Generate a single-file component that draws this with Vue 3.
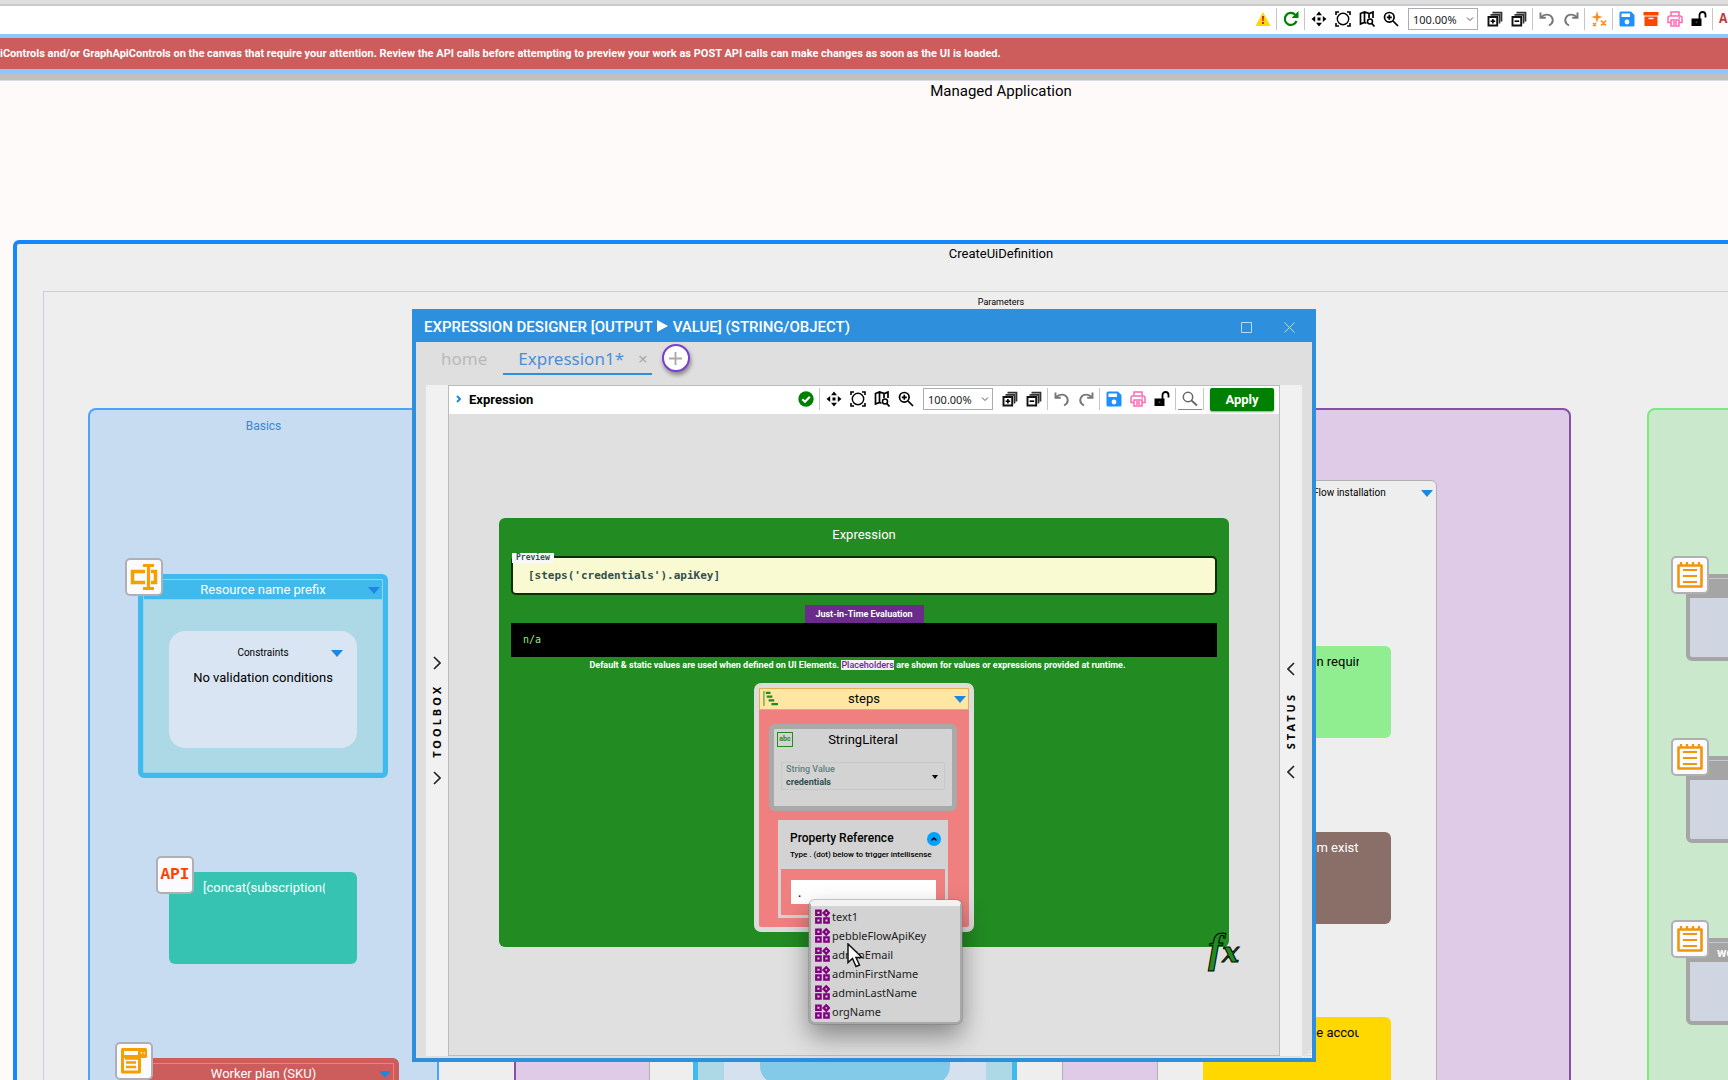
<template>
  <div class="app">
    <svg class="sprite" aria-hidden="true">
      <symbol id="i-warn" viewBox="0 0 16 16"><path d="M8 1 15.500 15H.5z" fill="#ffd800" /><path d="M7 5h2l-.3 5H7.300zM7 11h2v2H7z" fill="#d22" /></symbol>
      <symbol id="i-refresh" viewBox="0 0 16 16"><path d="M13.500 10A6 6 0 1 1 12.200 3.800" fill="none" stroke="green" stroke-width="2.200" /><path d="M15.500 0v7h-7z" fill="green" /></symbol>
      <symbol id="i-move" viewBox="0 0 16 16"><path d="M8 .5l3 3.700H5zM8 15.500l3-3.700H5zM.5 8l3.700-3v6zM15.500 8l-3.700-3v6zM6.500 6.500h3v3h-3z" /></symbol>
      <symbol id="i-fit" viewBox="0 0 16 16"><circle cx="8" cy="8" r="5.700" fill="none" stroke="#000" stroke-width="1.400" /><path d="M1 4V1h3M12 1h3v3M15 12v3h-3M4 15H1v-3" fill="none" stroke="#000" stroke-width="1.600" /></symbol>
      <symbol id="i-map" viewBox="0 0 16 16"><path d="M7.500 12.200 5.500 11.500 1.500 13V2.500L5.500 1l5 1.500L14 1v6M5.500 1v10.500M10 2.500V7" fill="none" stroke="#000" stroke-width="1.700" /><circle cx="11" cy="10.500" r="2.500" fill="none" stroke="#000" stroke-width="1.500" /><path d="M12.800 12.500 15.500 15.500" stroke="#000" stroke-width="1.700" /></symbol>
      <symbol id="i-zoom" viewBox="0 0 16 16"><circle cx="6.300" cy="6.300" r="4.800" fill="none" stroke="#000" stroke-width="1.700" /><path d="M10 10l5 5M3.800 6.300h5M6.300 3.800v5" fill="none" stroke="#000" stroke-width="1.700" /></symbol>
      <symbol id="i-expand" viewBox="0 0 16 16"><path d="M1.500 6h8.700v8.500H1.500z" fill="none" stroke="#111" stroke-width="1.900" /><path d="M3.500 3.800h9V12.500M5.500 1.600h9V10.500" fill="none" stroke="#333" stroke-width="1.700" /><path d="M5.900 8v4.500M3.600 10.200h4.600" stroke="#000" stroke-width="1.600" /></symbol>
      <symbol id="i-collapse" viewBox="0 0 16 16"><path d="M1.500 6h8.700v8.500H1.500z" fill="none" stroke="#111" stroke-width="1.900" /><path d="M3.500 3.800h9V12.500M5.500 1.600h9V10.500" fill="none" stroke="#333" stroke-width="1.700" /><path d="M3.600 10.200h4.600" stroke="#000" stroke-width="1.600" /></symbol>
      <symbol id="i-undo" viewBox="0 0 16 16"><path d="M1.500 1.500v5.300h5.300M2 6.300C5 3 10.500 2.500 13 6.500c1.500 3 .5 6-3 8" fill="none" stroke="#777" stroke-width="1.900" /></symbol>
      <symbol id="i-redo" viewBox="0 0 16 16"><path d="M14.500 1.500v5.300H9.200M14 6.300C11 3 5.500 2.500 3 6.500c-1.500 3-.5 6 3 8" fill="none" stroke="#777" stroke-width="1.900" /></symbol>
      <symbol id="i-magic" viewBox="0 0 16 16"><path d="M6 0l1.300 4.700L12 6 7.300 7.300 6 12 4.700 7.300 0 6l4.700-1.300z" fill="#ff8c1a" /><path d="M10 9.500l5 5M15 9.500l-5 5M2 12l3 3M5 12l-3 3" stroke="#ff8c1a" stroke-width="1.600" /></symbol>
      <symbol id="i-save" viewBox="0 0 16 16"><path d="M2 .5h10L15.500 4v10a1.500 1.500 0 0 1-1.500 1.500H2A1.500 1.500 0 0 1 .5 14V2A1.500 1.500 0 0 1 2 .5z" fill="#1e90ff" /><path d="M2.500 2.500h8.500v3.500H2.500z" fill="#fff" /><circle cx="8" cy="11" r="2.400" fill="#fff" /></symbol>
      <symbol id="i-archive" viewBox="0 0 16 16"><path d="M.5 1h15v3.500H.5zM1.500 5.500h13v9.500h-13z" fill="#ff4500" /><path d="M5.500 7.500h5" stroke="#fff" stroke-width="1.400" /></symbol>
      <symbol id="i-print" viewBox="0 0 16 16"><path d="M4 5V1h8v4M4 11.500H1V7a2 2 0 0 1 2-2h10a2 2 0 0 1 2 2v4.500h-3M4 9h8v6H4zM6 11h4M6 13h4M11.500 7h1.500" fill="none" stroke="#ff69b4" stroke-width="1.500" /></symbol>
      <symbol id="i-unlock" viewBox="0 0 16 16"><path d="M.5 7.500h10V15H.5z" /><path d="M8.500 8V4a3 3 0 0 1 6 0v2.500" fill="none" stroke="#000" stroke-width="1.800" /><circle cx="5.500" cy="11.200" r="1" fill="#444" /></symbol>
      <symbol id="i-ok" viewBox="0 0 16 16"><circle cx="8" cy="8" r="7.700" fill="green" /><path d="M4.300 8.200 7 10.800 11.800 5.800" fill="none" stroke="#fff" stroke-width="2.200" /></symbol>
      <symbol id="i-search" viewBox="0 0 16 16"><circle cx="6" cy="6" r="4.700" fill="none" stroke="#666" stroke-width="1.500" /><path d="M9.500 9.500l5.500 5" stroke="#666" stroke-width="1.800" /></symbol>
      <symbol id="i-rename" viewBox="0 0 28 28"><path d="M15 8.500H2.500v11H15M21 8.500h4.500v11H21" fill="none" stroke="#f4a000" stroke-width="3.500" /><path d="M13 2.500h11M13 25.500h11M18.500 2.500v23" stroke="#f4a000" stroke-width="3.200" /></symbol>
      <symbol id="i-form" viewBox="0 0 28 28"><path d="M2.500 2.500h17v22.500h-17zM2.500 9.500h23v-7h-6" fill="none" stroke="#f4a000" stroke-width="3" stroke-linejoin="round" /><path d="M5 11.500h13M6 15.500h10M6 20h10" stroke="#f4a000" stroke-width="2.500" /><path d="M19 3h6v6h-6z" fill="#f4a000" /><path d="M21 5l.8 2M24 5l.5 2" stroke="#fff" /></symbol>
      <symbol id="i-note" viewBox="0 0 28 28"><path d="M2.500 4.500h23v21h-23z" fill="none" stroke="#f0960a" stroke-width="2.600" stroke-linejoin="round" /><path d="M5 1v3M11 1v3M17 1v3M23 1v3M7 9h14M7 15h14M7 21h14" stroke="#f0960a" stroke-width="2.200" /></symbol>
      <symbol id="i-member" viewBox="0 0 16 16"><path d="M1.300 1.800h4.700v4.400H1.300zM1.300 9.900h4.700v4.600H1.300zM9.900 9.900h4.700v4.600H9.900zM12 1.300l2.900 2.900L12 7.100 9.100 4.200z" fill="none" stroke="purple" stroke-width="2.400" /></symbol>
      <symbol id="i-steps" viewBox="0 0 16 16"><path d="M1 0v16" stroke="#228b22" stroke-width="1" /><path d="M3 2h5M4 6h6M6 10h6M9 14h7" stroke="#228b22" stroke-width="2.200" /></symbol>
    </svg>

    <header class="topbar">
      <template v-for="(tool, i) in topTools" :key="i">
        <span v-if="tool === '|'" class="sep"></span>
        <span v-else-if="tool === 'select'" class="zoom-box">
          <select aria-label="Zoom"><option>100.00%</option></select>
          <svg class="chev" viewBox="0 0 8 8"><path d="M1 2.500l3 3 3-3" /></svg>
        </span>
        <button v-else class="tool" :aria-label="tool"><svg><use :href="'#i-' + tool" /></svg></button>
      </template>
      <button class="api-tool">API</button>
    </header>
    <div class="banner">iControls and/or GraphApiControls on the canvas that require your attention. Review the API calls before attempting to preview your work as POST API calls can make changes as soon as the UI is loaded.</div>
    <div class="divider"></div>

    <main class="canvas">
      <h1>Managed Application</h1>
      <section class="create">
        <h2>CreateUiDefinition</h2>
        <div class="params">
          <h3>Parameters</h3>

          <div class="group basics">
            <h4>Basics</h4>
            <div class="node prefix">
              <span class="badge"><svg><use href="#i-rename" /></svg></span>
              <div class="node-head"><span>Resource name prefix</span><i class="tri"></i></div>
              <div class="constraints">
                <div class="constraints-head">Constraints<i class="tri"></i></div>
                <p>No validation conditions</p>
              </div>
            </div>
            <div class="card concat">
              <span class="badge api">API</span>
              <div class="clip">[concat(subscription(</div>
            </div>
            <div class="node worker">
              <span class="badge"><svg><use href="#i-form" /></svg></span>
              <div class="node-head"><span>Worker plan (SKU)</span><i class="tri"></i></div>
            </div>
          </div>

          <div class="group credentials">
            <div class="section first">
              <div class="blue-node"><div class="blue-panel"><div class="blue-inner"></div></div></div>
            </div>
            <div class="section second">
              <div class="section-head">Flow installation</div>
              <i class="tri"></i>
              <div
                v-for="card in cards"
                :key="card.text"
                :class="['card', card.kind]"
                :style="{ top: card.top + 'px' }"
              >
                <div class="clip tail">{{ card.text }}</div>
              </div>
            </div>
          </div>

          <div class="group outputs">
            <div v-for="out in outputs" :key="out.top" class="node output" :style="{ top: out.top + 'px' }">
              <span class="badge"><svg><use href="#i-note" /></svg></span>
              <div class="node-head">{{ out.text }}</div>
            </div>
          </div>
        </div>
      </section>
    </main>

    <div class="window" role="dialog" aria-label="Expression designer">
      <div class="titlebar">
        <span>EXPRESSION DESIGNER [OUTPUT <svg class="play" viewBox="0 0 11 12"><path d="M0 0l11 6-11 6z" /></svg> VALUE] (STRING/OBJECT)</span>
        <button aria-label="Maximize"><svg viewBox="0 0 11 11"><path d="M.5.5h10v10H.5z" /></svg></button>
        <button aria-label="Close"><svg viewBox="0 0 11 11"><path d="M.5.5l10 10M10.500.5l-10 10" /></svg></button>
      </div>
      <nav class="tabs">
        <a href="#home" class="tab">home</a>
        <a href="#expression" class="tab active">Expression1*<span class="x">×</span></a>
        <button class="add" aria-label="Add tab"><svg viewBox="0 0 14 14"><path d="M7 0v14M0 7h14" /></svg></button>
      </nav>
      <div class="body">
        <aside class="side">
          <svg viewBox="0 0 8 14"><path d="M1 1l6 6-6 6" /></svg>
          <span>TOOLBOX</span>
          <svg viewBox="0 0 8 14"><path d="M1 1l6 6-6 6" /></svg>
        </aside>
        <div class="designer">
          <div class="bar">
            <svg class="open" viewBox="0 0 5 8"><path d="M1 1l3 3-3 3" /></svg>
            <b>Expression</b>
            <template v-for="(tool, i) in designerTools" :key="i">
              <span v-if="tool === '|'" class="sep"></span>
              <span v-else-if="tool === 'select'" class="zoom-box">
                <select aria-label="Designer zoom"><option>100.00%</option></select>
                <svg class="chev" viewBox="0 0 8 8"><path d="M1 2.500l3 3 3-3" /></svg>
              </span>
              <button v-else :class="['tool', { underlined: tool === 'search' }]" :aria-label="tool"><svg><use :href="'#i-' + tool" /></svg></button>
            </template>
            <button class="apply">Apply</button>
          </div>

          <div class="expression">
            <h4>Expression</h4>
            <div class="preview"><span class="legend">Preview</span>[steps('credentials').apiKey]</div>
            <div class="jit">Just-in-Time Evaluation</div>
            <div class="result">n/a</div>
            <p class="hint">Default &amp; static values are used when defined on UI Elements. <mark>Placeholders</mark> are shown for values or expressions provided at runtime.</p>

            <div class="steps">
              <div class="steps-head"><svg><use href="#i-steps" /></svg>steps<i class="tri"></i></div>
              <div class="literal">
                <div class="literal-head"><span class="abc">abc</span>StringLiteral</div>
                <label class="field">
                  <span>String Value</span>
                  <select><option>credentials</option></select>
                  <i class="caret"></i>
                </label>
              </div>
              <div class="property">
                <div class="property-head">
                  <label for="prop">Property Reference</label>
                  <button aria-label="Collapse"><svg viewBox="0 0 8 8"><path d="M1.500 5.500 4 3l2.500 2.500" /></svg></button>
                  <small>Type . (dot) below to trigger intellisense</small>
                </div>
                <input id="prop" v-model="reference" type="text" />
              </div>
              <ul class="suggest">
                <li v-for="name in suggestions" :key="name"><svg><use href="#i-member" /></svg>{{ name }}</li>
              </ul>
              <svg class="cursor" viewBox="0 0 16 25"><path d="M1 1v18.500l4.500-4 3.500 8 3.500-1.500L9 14.500h6z" /></svg>
            </div>
            <span class="fx">f<span class="small">x</span></span>
          </div>
        </div>
        <aside class="side status">
          <svg viewBox="0 0 8 14"><path d="M7 1L1 7l6 6" /></svg>
          <span>STATUS</span>
          <svg viewBox="0 0 8 14"><path d="M7 1L1 7l6 6" /></svg>
        </aside>
      </div>
      <svg class="grip" viewBox="0 0 10 10"><path d="M1 10V8M4 10V6M7 10V3M9.500 10V0" /></svg>
    </div>
  </div>
</template>

<script setup>
import { ref } from 'vue'

const reference = ref('.')

const topTools = [
  'warn', '|', 'refresh', '|', 'move', 'fit', 'map', 'zoom', 'select', 'expand', 'collapse', '|',
  'undo', 'redo', '|', 'magic', '|', 'save', 'archive', 'print', 'unlock', '|',
]
const designerTools = [
  'ok', '|', 'move', 'fit', 'map', 'zoom', 'select', 'expand', 'collapse', '|',
  'undo', 'redo', '|', 'save', 'print', 'unlock', '|', 'search', '|',
]

const cards = [
  { text: 'on requir', kind: 'green', top: 165 },
  { text: 'om existin', kind: 'brown', top: 351 },
  { text: 'ge accou', kind: 'yellow', top: 536 },
]

const outputs = [
  { text: '', top: 164 },
  { text: '', top: 346 },
  { text: 'wo', top: 528 },
]

const suggestions = ['text1', 'pebbleFlowApiKey', 'adminEmail', 'adminFirstName', 'adminLastName', 'orgName']
</script>

<style>
body {
  margin: 0;
}
</style>

<style scoped>
* {
  box-sizing: border-box;
}
.app {
  position: relative;
  display: flex;
  flex-direction: column;
  height: 100vh;
  min-height: 1064px;
  overflow: hidden;
  font-family: Roboto, sans-serif;
  color: #000;
}
.sprite {
  position: absolute;
  width: 0;
  height: 0;
}
h1, h2, h3, h4, p, ul {
  margin: 0;
  padding: 0;
  font-weight: 400;
  text-align: center;
}
button {
  padding: 0;
  border: 0;
  background: none;
  font-family: inherit;
}

/* toolbars */
.topbar {
  display: flex;
  flex: none;
  align-items: center;
  justify-content: flex-end;
  height: 34px;
  border-top: 4px solid #dedede;
  box-shadow: inset 0 2px #cacaca;
  background: #fff;
}
.tool {
  display: flex;
  flex: none;
  align-items: center;
  justify-content: center;
  width: 24px;
  height: 22px;
}
.tool svg {
  width: 16px;
  height: 16px;
}
.sep {
  width: 1px;
  height: 22px;
  margin: 0 2px 0 1px;
  background: #c6c6c6;
}
.zoom-box {
  position: relative;
  display: flex;
  width: 70px;
  height: 22px;
  margin: 0 5px;
}
.zoom-box select {
  width: 100%;
  padding: 0 4px;
  border: 1px solid #a9abb5;
  border-radius: 0;
  background: #fff;
  appearance: none;
  font: 11px "Noto Sans", sans-serif;
  color: #222;
}
.chev {
  position: absolute;
  right: 4px;
  top: 7px;
  width: 8px;
  height: 8px;
  fill: none;
  stroke: #555;
}
.api-tool {
  flex: none;
  width: 9px;
  margin-left: 4px;
  text-align: left;
  font: bold 14px "Liberation Mono", monospace;
  color: #c0393b;
}
.banner {
  flex: none;
  height: 40px;
  border: solid #8cc8ff;
  border-width: 4px 0 5px;
  background: #cd5c5c;
  color: #fff;
  font-size: 11px;
  font-weight: 700;
  line-height: 32px;
  white-space: nowrap;
}
.divider {
  flex: none;
  height: 7px;
  border-bottom: 1px solid #d8dcec;
  background: #c0c0c0;
}

/* canvas */
.canvas {
  position: relative;
  flex: 1;
  overflow: hidden;
  background: #fffafa;
}
.canvas h1 {
  position: absolute;
  top: 0;
  left: 13px;
  right: -261px;
  font-size: 15px;
  line-height: 20px;
}
.create {
  position: absolute;
  top: 159px;
  left: 13px;
  right: -261px;
  height: 1000px;
  border: 4px solid #1487ff;
  border-radius: 6px;
  background: #eee;
}
.create h2 {
  font-size: 13px;
  line-height: 20px;
}
.params {
  position: absolute;
  top: 47px;
  left: 26px;
  right: 26px;
  bottom: 0;
  border: 1px solid #c8cfe0;
}
.params h3 {
  font-size: 9px;
  line-height: 20px;
}
.group {
  position: absolute;
  top: 116px;
  height: 900px;
  border: 2px solid;
  border-radius: 8px;
}
.group h4 {
  font-size: 12px;
  line-height: 32px;
}
.basics {
  left: 44px;
  width: 351px;
  border-color: #4aa3ff;
  background: #c8dcf1;
  color: #3b86d8;
}
.credentials {
  left: 470px;
  width: 1057px;
  border-color: #8550a5;
  background: #dfcbe7;
}
.outputs {
  left: 1603px;
  width: 330px;
  border-color: #7be97b;
  background: #cae8cb;
}
.tri {
  width: 0;
  border: solid transparent;
  border-width: 7px 6px 0;
  border-top-color: #1e88e0;
}
.badge {
  position: absolute;
  z-index: 1;
  top: -21px;
  left: -18px;
  display: flex;
  align-items: center;
  justify-content: center;
  width: 38px;
  height: 38px;
  border: 2px solid #b0b0b4;
  border-radius: 5px;
  background: #fafaff;
}
.badge svg {
  width: 28px;
  height: 28px;
}
.badge.api {
  top: -16px;
  left: -13px;
  color: #ff4000;
  font: bold 16px "Liberation Mono", monospace;
}
.node {
  position: absolute;
  border: 5px solid;
  border-radius: 6px;
}
.node-head {
  position: relative;
  height: 21px;
  border: 1px solid;
  color: #fff;
  text-align: center;
  font-size: 13px;
  line-height: 20px;
}
.node-head .tri {
  position: absolute;
  top: 7px;
  right: 2px;
}
.prefix {
  top: 164px;
  left: 48px;
  width: 250px;
  height: 204px;
  border-color: #40b9ec;
  background: #add8e6;
  box-shadow: inset 0 0 0 1px #8fd3ef;
}
.prefix .node-head {
  background: #40b9ec;
  border-color: #8fd3ef;
}
.constraints {
  height: 117px;
  margin: 31px 26px 0;
  border-radius: 16px;
  background: #d9e5f2;
  color: #000;
  padding-top: 14px;
}
.constraints-head {
  position: relative;
  font-size: 10px;
  line-height: 16px;
  text-align: center;
}
.constraints-head .tri {
  position: absolute;
  top: 5px;
  right: 14px;
}
.constraints p {
  font-size: 13px;
  line-height: 34px;
}
.card {
  position: absolute;
  width: 188px;
  height: 92px;
  border-radius: 6px;
  font-size: 13px;
}
.clip {
  margin: 6px 32px 0 34px;
  overflow: hidden;
  line-height: 20px;
  white-space: nowrap;
}
.clip.tail {
  margin-left: 106px;
}
.concat {
  top: 462px;
  left: 79px;
  background: #36c3b2;
  color: #fff;
}
.worker {
  top: 648px;
  left: 38px;
  width: 271px;
  height: 200px;
  border-color: #cd5c5c;
  background: #cd5c5c;
}
.worker .node-head {
  border-color: #f08070;
  border-bottom: 0;
}
.section {
  position: absolute;
  top: 70px;
  height: 830px;
  border: 1px solid #b0b0b0;
  border-radius: 6px;
  background: #eee;
}
.first {
  left: 133px;
  width: 414px;
}
.second {
  left: 641px;
  width: 280px;
}
.section-head {
  padding-left: 155px;
  font-size: 10px;
  line-height: 24px;
}
.section > .tri {
  position: absolute;
  top: 9px;
  right: 3px;
}
.blue-node {
  width: 324px;
  height: 740px;
  margin: 60px 43px;
  border: 5px solid #40b9ec;
  border-radius: 6px;
  background: #add8e6;
  padding: 30px 26px;
}
.blue-panel {
  height: 640px;
  background: #d5e1ef;
  padding: 390px 36px 0;
}
.blue-inner {
  height: 118px;
  border-radius: 18px;
  background: #82cae8;
}
.second .card {
  left: 45px;
}
.green {
  background: #90ee90;
}
.brown {
  background: #8a6f68;
  color: #fff;
}
.yellow {
  background: #ffd800;
}
.output {
  left: 37px;
  width: 270px;
  height: 87px;
  border-width: 4px;
  border-color: #a5a5a5;
  background: #d0d5e2;
}
.output .badge {
  left: -19px;
  top: -22px;
}
.output .node-head {
  height: 20px;
  border-width: 1px 0 0;
  border-color: #c4c8d0;
  background: #a5a5a5;
  padding-left: 27px;
  text-align: left;
  font-weight: 700;
}

/* designer window */
.window {
  position: absolute;
  top: 309px;
  left: 0;
  right: 0;
  display: flex;
  flex-direction: column;
  width: 904px;
  height: 753px;
  margin: 0 auto;
  border: 4px solid #2e8fdc;
  border-top-width: 1px;
  background: #dfdfdf;
}
.titlebar {
  display: flex;
  flex: none;
  align-items: center;
  height: 32px;
  padding: 2px 17px 0 8px;
  background: #2e8fdc;
  color: #fff;
  font-size: 15px;
  font-weight: 500;
}
.titlebar span {
  flex: 1;
}
.titlebar button {
  margin-left: 32px;
}
.titlebar button svg {
  display: block;
  width: 11px;
  height: 11px;
  fill: none;
  stroke: #b9dcf8;
}
.play {
  width: 11px;
  height: 12px;
  margin: 0 1px;
  fill: #fff;
}
.tabs {
  display: flex;
  flex: none;
  height: 33px;
  padding-left: 25px;
  font-family: "Noto Sans", sans-serif;
  font-size: 17px;
  line-height: 33px;
}
.tab {
  color: #b9b9b9;
  text-decoration: none;
}
.tab.active {
  margin: 0 10px 0 16px;
  padding: 0 4px 0 15px;
  border-bottom: 2px solid #2e8fdc;
  color: #4a8fd6;
}
.x {
  margin-left: 14px;
  color: #aaa;
}
.add {
  width: 28px;
  height: 28px;
  margin-top: 2px;
  border: 2px solid #7a3fd0;
  border-radius: 50%;
  background: #fff;
  box-shadow: 1px 3px 4px rgba(0, 0, 0, 0.4);
}
.add svg {
  display: block;
  width: 13px;
  height: 13px;
  margin: auto;
  fill: none;
  stroke: #aaa;
  stroke-width: 2;
}
.body {
  display: flex;
  flex: 1;
  margin: 10px 10px 2px;
}
.side {
  display: flex;
  flex-direction: column;
  align-items: center;
  justify-content: center;
  gap: 14px;
  width: 22px;
  background: #f1f1f1;
  font: bold 11px "Noto Sans", sans-serif;
}
.side span {
  writing-mode: vertical-rl;
  transform: rotate(180deg);
  line-height: 14px;
  letter-spacing: 3px;
}
.side svg {
  width: 8px;
  height: 14px;
  fill: none;
  stroke: #222;
  stroke-width: 1.6;
}
.designer {
  flex: 1;
  border: 1px solid #bbb;
  background: #e0e0e0;
}
.bar {
  display: flex;
  align-items: center;
  height: 28px;
  padding: 0 5px 2px 7px;
  background: #fff;
}
.bar b {
  flex: 1;
  margin-left: 8px;
  font-size: 13px;
  font-weight: 700;
}
.open {
  width: 5px;
  height: 8px;
  fill: none;
  stroke: #1e88e0;
  stroke-width: 2;
}
.tool.underlined {
  border-bottom: 1px solid #888;
}
.apply {
  width: 64px;
  height: 23px;
  margin-left: 4px;
  border-radius: 2px;
  background: green;
  box-shadow: 0 1px 2px rgba(0, 0, 0, 0.4);
  color: #fff;
  font-size: 13px;
  font-weight: 700;
}
.expression {
  position: relative;
  height: 429px;
  margin: 104px 50px 0;
  border-radius: 6px;
  background: #228b22;
  padding: 6px 12px 0;
  text-align: center;
}
.expression h4 {
  color: #fff;
  font-size: 13px;
  line-height: 21px;
}
.preview {
  position: relative;
  height: 39px;
  margin-top: 11px;
  border: 2px solid #0a2d0a;
  border-radius: 5px;
  background: #fafad2;
  padding-left: 15px;
  color: #2f4f4f;
  font: bold 11px "DejaVu Sans Mono", monospace;
  line-height: 36px;
  text-align: left;
}
.legend {
  position: absolute;
  top: -5px;
  left: -1px;
  padding: 0 4px;
  background: #f8f8f8;
  font-size: 8px;
  line-height: 10px;
}
.jit {
  width: 119px;
  margin: 10px auto 0;
  background: #6b2a8c;
  color: #fff;
  font-size: 9px;
  font-weight: 700;
  line-height: 18px;
}
.result {
  height: 34px;
  background: #000;
  padding-left: 12px;
  color: #90ee90;
  font: 10px "DejaVu Sans Mono", monospace;
  line-height: 34px;
  text-align: left;
}
.hint {
  padding-right: 13px;
  color: #fff;
  font-size: 9px;
  font-weight: 700;
  line-height: 16px;
}
.hint mark {
  background: #f5f0fa;
  color: #6b2a8c;
  font-weight: 500;
}
.steps {
  position: relative;
  width: 220px;
  height: 249px;
  margin: 10px auto 0;
  border: 5px solid #dcdcdc;
  border-radius: 7px;
  background: #f08080;
}
.steps-head {
  position: relative;
  height: 22px;
  border: 1px solid #e5b04e;
  background: #ffe7a3;
  font-size: 13px;
  line-height: 20px;
}
.steps-head svg {
  position: absolute;
  top: 2px;
  left: 3px;
  width: 15px;
  height: 15px;
}
.steps-head .tri {
  position: absolute;
  top: 7px;
  right: 2px;
}
.literal {
  height: 87px;
  margin: 14px 12px 0 10px;
  border: 5px solid #a9a9a9;
  border-radius: 6px;
  background: #d3d3d3;
}
.literal-head {
  position: relative;
  font-size: 13px;
  line-height: 22px;
}
.abc {
  position: absolute;
  top: 3px;
  left: 3px;
  width: 16px;
  height: 15px;
  border: 1px solid #228b22;
  color: #228b22;
  font-size: 7px;
  font-weight: 700;
  line-height: 12px;
}
.field {
  position: relative;
  display: flex;
  flex-direction: column;
  height: 28px;
  margin: 11px 7px 0;
  border: 1px solid #c8c8c8;
  padding: 0 4px;
  color: #5f8080;
  font-size: 9px;
  font-weight: 500;
  line-height: 13px;
  text-align: left;
}
.field select {
  height: 13px;
  padding: 0;
  border: 0;
  background: none;
  appearance: none;
  color: #2f4f4f;
  font: 700 9px/13px Roboto, sans-serif;
}
.caret {
  position: absolute;
  top: 12px;
  right: 6px;
  border: solid transparent;
  border-width: 4px 3px 0;
  border-top-color: #000;
}
.property {
  width: 170px;
  height: 98px;
  margin: 9px 0 0 19px;
  border: 3px solid #d3d3d3;
  text-align: left;
}
.property-head {
  display: flex;
  flex-wrap: wrap;
  align-content: flex-start;
  align-items: center;
  justify-content: space-between;
  height: 46px;
  background: #d3d3d3;
  padding: 7px 4px 0 9px;
}
.property-head label {
  font-size: 12px;
  font-weight: 500;
  line-height: 17px;
}
.property-head button {
  width: 14px;
  height: 14px;
  border-radius: 50%;
  background: #00a2ff;
}
.property-head button svg {
  display: block;
  width: 8px;
  height: 8px;
  margin: auto;
  fill: none;
  stroke: #000;
  stroke-width: 1.5;
}
.property-head small {
  width: 100%;
  font-size: 8px;
  font-weight: 500;
  line-height: 16px;
  white-space: nowrap;
}
.property input {
  display: block;
  width: 145px;
  height: 24px;
  margin: 11px 0 0 10px;
  padding: 0 7px;
  border: 0;
  border-radius: 0;
  background: #fff;
  font: 12px "Noto Sans", sans-serif;
}
.suggest {
  position: absolute;
  top: 212px;
  left: 50px;
  width: 153px;
  border: 2px solid #a8a8a8;
  border-top: 6px solid #f2f2f2;
  border-radius: 6px;
  background: #d3d3d3;
  box-shadow: 0 0 0 1px rgba(120, 120, 120, 0.4), 0 12px 26px rgba(0, 0, 0, 0.4);
  padding: 1px 4px;
  list-style: none;
  font: 11px "Noto Sans", sans-serif;
}
.suggest li {
  display: flex;
  align-items: center;
  gap: 2px;
  height: 19px;
  color: #222;
}
.suggest svg {
  width: 15px;
  height: 15px;
}
.cursor {
  position: absolute;
  top: 255px;
  left: 88px;
  width: 16px;
  height: 25px;
  fill: #fff;
  stroke: #111;
  stroke-width: 1.5;
}
.fx {
  position: absolute;
  right: -10px;
  bottom: -22px;
  color: #228b22;
  font: italic bold 42px/42px "Liberation Serif", serif;
  -webkit-text-stroke: 1px #000;
}
.fx .small {
  font: italic bold 28px "DejaVu Serif", serif;
}
.status {
  gap: 16px;
}
.grip {
  position: absolute;
  right: 0;
  bottom: 0;
  width: 10px;
  height: 10px;
  stroke: #fff;
  stroke-dasharray: 2 1;
}
</style>
